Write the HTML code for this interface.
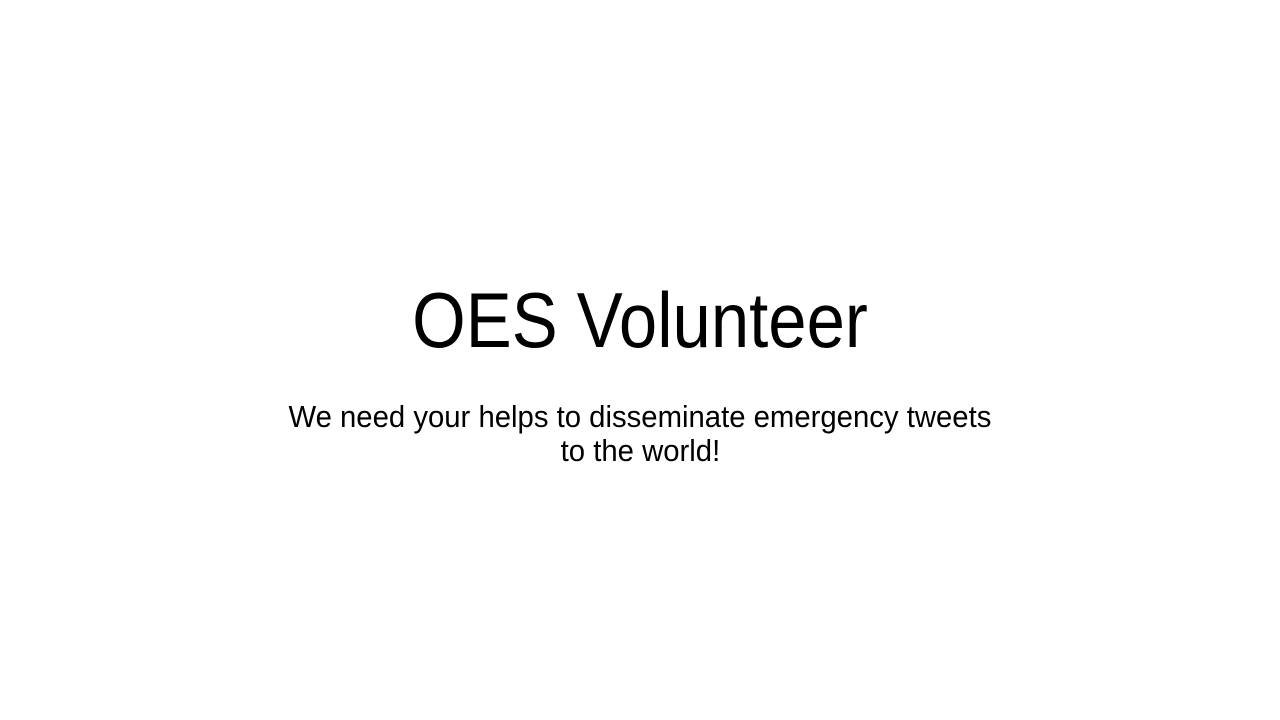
<!DOCTYPE html>
<html>
<head>
<meta charset="utf-8">
<style>
  html, body { margin: 0; padding: 0; }
  body { width: 1280px; height: 720px; background: #fff; position: relative; overflow: hidden; font-family: "Liberation Sans", sans-serif; color: #000; }
  .line { position: absolute; left: 0; width: 1280px; text-align: center; white-space: nowrap; line-height: 1; }
  .line span { display: inline-block; transform-origin: center; }
  .title { top: 281px; font-size: 78px; }
  .title span { transform: scaleX(0.883); }
  .sub { font-size: 31px; }
  .sub span { transform: scaleX(0.945); }
</style>
</head>
<body>
  <div class="line title"><span>OES Volunteer</span></div>
  <div class="line sub" style="top:401px"><span>We need your helps to disseminate emergency tweets</span></div>
  <div class="line sub" style="top:435px"><span>to the world!</span></div>
</body>
</html>
